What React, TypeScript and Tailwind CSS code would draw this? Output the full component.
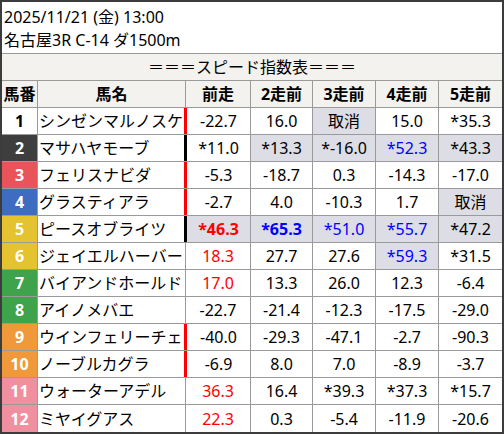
import React from 'react';

type Row = {
  no: number;
  name: string;
  numBg: string;
  numText: string;
  bar?: string;
  cells: { v: string; color?: string; bold?: boolean; shade?: boolean }[];
};

const R = 'text-[#ff0000]';
const B = 'text-[#0000ff]';

const rows: Row[] = [
  { no: 1, name: 'シンゼンマルノスケ', numBg: 'bg-white', numText: 'text-black', bar: 'border-r-[#ff0000]',
    cells: [{ v: '-22.7' }, { v: '16.0' }, { v: '取消', shade: true }, { v: '15.0' }, { v: '*35.3' }] },
  { no: 2, name: 'マサハヤモーブ', numBg: 'bg-[#3e3e3e]', numText: 'text-white', bar: 'border-r-black',
    cells: [{ v: '*11.0' }, { v: '*13.3', shade: true }, { v: '*-16.0', shade: true }, { v: '*52.3', color: B, shade: true }, { v: '*43.3', shade: true }] },
  { no: 3, name: 'フェリスナビダ', numBg: 'bg-[#e8545a]', numText: 'text-white', bar: 'border-r-[#ff0000]',
    cells: [{ v: '-5.3' }, { v: '-18.7' }, { v: '0.3' }, { v: '-14.3' }, { v: '-17.0' }] },
  { no: 4, name: 'グラスティアラ', numBg: 'bg-[#3d6cc0]', numText: 'text-white', bar: 'border-r-[#ff0000]',
    cells: [{ v: '-2.7' }, { v: '4.0' }, { v: '-10.3' }, { v: '1.7' }, { v: '取消', shade: true }] },
  { no: 5, name: 'ピースオブライツ', numBg: 'bg-[#e5c22f]', numText: 'text-white', bar: 'border-r-black',
    cells: [{ v: '*46.3', color: R, bold: true, shade: true }, { v: '*65.3', color: B, bold: true, shade: true }, { v: '*51.0', color: B, shade: true }, { v: '*55.7', color: B, shade: true }, { v: '*47.2', shade: true }] },
  { no: 6, name: 'ジェイエルハーバー', numBg: 'bg-[#e5c22f]', numText: 'text-white',
    cells: [{ v: '18.3', color: R }, { v: '27.7' }, { v: '27.6' }, { v: '*59.3', color: B, shade: true }, { v: '*31.5' }] },
  { no: 7, name: 'バイアンドホールド', numBg: 'bg-[#3ea34b]', numText: 'text-white',
    cells: [{ v: '17.0', color: R }, { v: '13.3' }, { v: '26.0' }, { v: '12.3' }, { v: '-6.4' }] },
  { no: 8, name: 'アイノメバエ', numBg: 'bg-[#3ea34b]', numText: 'text-white',
    cells: [{ v: '-22.7' }, { v: '-21.4' }, { v: '-12.3' }, { v: '-17.5' }, { v: '-29.0' }] },
  { no: 9, name: 'ウインフェリーチェ', numBg: 'bg-[#ef993b]', numText: 'text-white', bar: 'border-r-[#ff0000]',
    cells: [{ v: '-40.0' }, { v: '-29.3' }, { v: '-47.1' }, { v: '-2.7' }, { v: '-90.3' }] },
  { no: 10, name: 'ノーブルカグラ', numBg: 'bg-[#ef993b]', numText: 'text-white', bar: 'border-r-[#ff0000]',
    cells: [{ v: '-6.9' }, { v: '8.0' }, { v: '7.0' }, { v: '-8.9' }, { v: '-3.7' }] },
  { no: 11, name: 'ウォーターアデル', numBg: 'bg-[#f08f9f]', numText: 'text-white',
    cells: [{ v: '36.3', color: R }, { v: '16.4' }, { v: '*39.3' }, { v: '*37.3' }, { v: '*15.7' }] },
  { no: 12, name: 'ミヤイグアス', numBg: 'bg-[#f08f9f]', numText: 'text-white',
    cells: [{ v: '22.3', color: R }, { v: '0.3' }, { v: '-5.4' }, { v: '-11.9' }, { v: '-20.6' }] },
];

// widths for 2走前..5走前 ; 前走 takes the rest
const restW = ['w-[62px] border-r', 'w-[63px] border-r', 'w-[63px] border-r', 'w-[63px]'];

export default function App() {
  return (
    <div
      className="w-[504px] h-[434px] border-2 border-[#3c3c3c] bg-white flex flex-col text-[16px] text-black overflow-hidden"
      style={{ fontFamily: '"Noto Sans", "Noto Sans CJK JP", sans-serif' }}
    >
      {/* race info */}
      <div className="h-[52px] shrink-0 border-b border-[#9a9a9a] pt-[4px] pl-[2px] leading-[23px]">
        <div>2025/11/21 (金) 13:00</div>
        <div>名古屋3R C-14 ダ1500m</div>
      </div>

      {/* title */}
      <div className="h-[27px] shrink-0 border-b border-[#9a9a9a] bg-[#f3f2ee] flex items-center justify-center leading-none">
        ＝＝＝スピード指数表＝＝＝
      </div>

      {/* column header */}
      <div className="h-[27px] shrink-0 border-b border-[#9a9a9a] bg-[#f3f2ee] flex font-bold leading-none">
        <div className="w-[36px] border-r border-[#9a9a9a] flex items-center justify-center">馬番</div>
        <div className="w-[148px] border-r border-[#9a9a9a] flex items-center justify-center">馬名</div>
        <div className="flex-1 border-r border-[#9a9a9a] flex items-center justify-center">前走</div>
        {['2走前', '3走前', '4走前', '5走前'].map((h, i) => (
          <div key={h} className={`${restW[i]} border-[#9a9a9a] flex items-center justify-center`}>{h}</div>
        ))}
      </div>

      {rows.map((r) => (
        <div key={r.no} className="h-[27px] shrink-0 border-b border-[#9a9a9a] last:border-b-0 flex leading-none">
          <div className={`w-[36px] border-r border-[#9a9a9a] ${r.numBg} ${r.numText} font-bold flex items-center justify-center`}>
            {r.no}
          </div>
          <div
            className={`${r.bar ? `w-[149px] border-r-[3px] ${r.bar}` : 'w-[148px] border-r border-[#9a9a9a]'} pl-[1px] flex items-center whitespace-nowrap overflow-hidden`}
          >
            {r.name}
          </div>
          {r.cells.map((c, i) => (
            <div
              key={i}
              className={`${i === 0 ? 'flex-1 border-r' : restW[i - 1]} border-[#9a9a9a] ${c.shade ? 'bg-[#dddde5]' : 'bg-white'} ${c.color ?? 'text-black'} ${c.bold ? 'font-bold' : ''} flex items-center justify-center`}
            >
              {c.v}
            </div>
          ))}
        </div>
      ))}
    </div>
  );
}
